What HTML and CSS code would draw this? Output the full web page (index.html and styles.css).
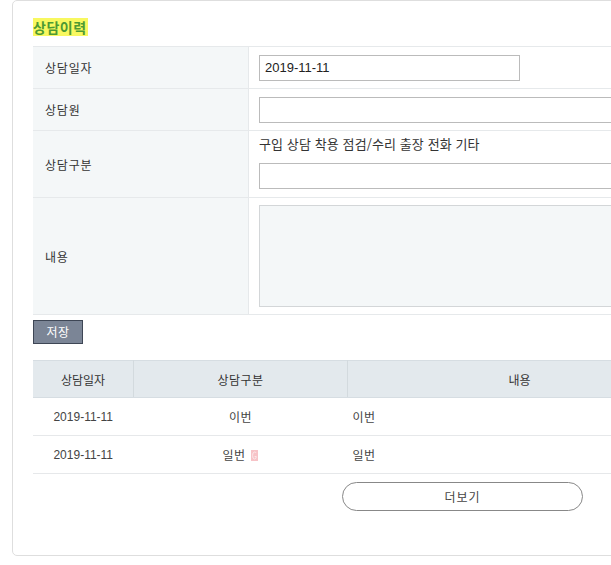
FILE: index.html
```html
<!DOCTYPE html>
<html lang="ko">
<head>
<meta charset="utf-8">
<link rel="stylesheet" href="styles.css">
</head>
<body>
<div class="card">
  <h2 class="title"><span class="hl">상담이력</span></h2>
  <table class="form">
    <tr class="r1">
      <th>상담일자</th>
      <td><input class="inp short" type="text" value="2019-11-11"></td>
    </tr>
    <tr class="r2">
      <th>상담원</th>
      <td><input class="inp long" type="text" value=""></td>
    </tr>
    <tr class="r3">
      <th>상담구분</th>
      <td>
        <div class="opts">구입 상담 착용 점검/수리 출장 전화 기타</div>
        <input class="inp long" type="text" value="">
      </td>
    </tr>
    <tr class="r4">
      <th>내용</th>
      <td><textarea class="ta"></textarea></td>
    </tr>
  </table>
  <button class="save" type="button">저장</button>
  <table class="list">
    <thead>
      <tr><th class="c1">상담일자</th><th class="c2">상담구분</th><th class="c3">내용</th></tr>
    </thead>
    <tbody>
      <tr><td class="c1 num">2019-11-11</td><td class="c2">이번</td><td class="c3">이번</td></tr>
      <tr><td class="c1 num">2019-11-11</td><td class="c2">일번 <svg class="new" width="7" height="11" viewBox="0 0 7 11"><rect width="7" height="11" fill="#f7c3c7"/><path d="M5.2 3 Q4.6 2 3.5 2 Q1.6 2 1.6 5.5 Q1.6 9 3.5 9 Q5.3 9 5.3 6.5 L3.6 6.5" fill="none" stroke="#fbe8ea" stroke-width="1"/></svg></td><td class="c3">일번</td></tr>
    </tbody>
  </table>
  <div class="more-wrap"><button class="more" type="button">더보기</button></div>
</div>
</body>
</html>
```

FILE: styles.css
```css
html, body {
  margin: 0;
  padding: 0;
  background: #fff;
}
body {
  font-family: "Noto Sans CJK KR", "Noto Sans", sans-serif;
  color: #333;
  font-size: 12px;
}
.card {
  margin-left: 12px;
  width: 658px;
  padding: 17px 20px 44px 20px;
  border: 1px solid #dedede;
  border-radius: 5px;
  background: #fff;
}
.title {
  margin: 0 0 10px 0;
  height: 18px;
  line-height: 18px;
  font-size: 14px;
  font-weight: bold;
  color: #4d9a33;
  letter-spacing: 0.5px;
}
.hl {
  display: inline-block;
  background: #f8f860;
  padding: 0 1px 0 0;
  height: 18px;
}
table {
  border-collapse: collapse;
  width: 658px;
}
.form th {
  width: 203px;
  text-align: left;
  font-weight: normal;
  font-size: 12px;
  letter-spacing: 0.8px;
  color: #333;
  background: #f4f7f8;
  padding: 0 0 0 12px;
  border-top: 1px solid #e6e9eb;
  border-bottom: 1px solid #e6e9eb;
  border-right: 1px solid #e6e9eb;
}
.form td {
  padding: 0 0 0 10px;
  border-top: 1px solid #e6e9eb;
  border-bottom: 1px solid #e6e9eb;
  vertical-align: middle;
}
.form .r1 th, .form .r1 td, .form .r2 th, .form .r2 td { height: 41px; }
.form .r3 th, .form .r3 td { height: 66px; }
.form .r4 th, .form .r4 td { height: 116px; }
.inp {
  display: block;
  box-sizing: border-box;
  height: 26px;
  border: 1px solid #bbb;
  padding: 0 5px;
  font-family: "Liberation Sans", "Noto Sans CJK KR", sans-serif;
  font-size: 13px;
  color: #222;
  background: #fff;
  margin: 0;
}
.inp.short { width: 261px; }
.inp.long { width: 420px; }
.r3 td { vertical-align: top; }
.opts {
  font-size: 13px;
  line-height: 16px;
  margin: 5px 0 11px 0;
  color: #333;
  letter-spacing: 0.1px;
}
.ta {
  display: block;
  box-sizing: border-box;
  width: 420px;
  height: 102px;
  border: 1px solid #d3d6d8;
  background: #f4f7f8;
  margin: 0;
  resize: none;
}
.save {
  display: block;
  margin: 5px 0 16px 0;
  width: 50px;
  height: 24px;
  padding: 0;
  background: #7b8596;
  border: 1px solid #3e4655;
  color: #fff;
  font-family: "Noto Sans CJK KR", sans-serif;
  font-size: 12px;
  line-height: 20px;
  letter-spacing: 0.5px;
}
.list th {
  height: 36px;
  background: #e3e9ed;
  font-weight: normal;
  font-size: 12px;
  color: #333;
  border-top: 1px solid #d6dde2;
  border-bottom: 1px solid #d6dde2;
  padding: 0;
}
.list th.c1, .list th.c2 { border-right: 1px solid #d3dade; }
.list td {
  height: 37px;
  border-bottom: 1px solid #e6e8ea;
  font-size: 12px;
  color: #444;
  padding: 0;
}
.list .c1 { width: 100px; text-align: center; }
.list .c2 { width: 213px; text-align: center; letter-spacing: 0.5px; }
.list td.c3 { text-align: left; padding-left: 5px; letter-spacing: 0.5px; }
.num {
  font-family: "Liberation Sans", "Noto Sans CJK KR", sans-serif;
  font-size: 12px;
  color: #444;
}
.new { vertical-align: -1px; margin-left: 2px; }
.more-wrap {
  padding: 8px 0 0 309px;
}
.more {
  display: block;
  width: 241px;
  height: 29px;
  border: 1px solid #888;
  border-radius: 15px;
  background: #fff;
  color: #444;
  font-family: "Noto Sans CJK KR", sans-serif;
  font-size: 12px;
  padding: 0;
  letter-spacing: 1px;
}
```
